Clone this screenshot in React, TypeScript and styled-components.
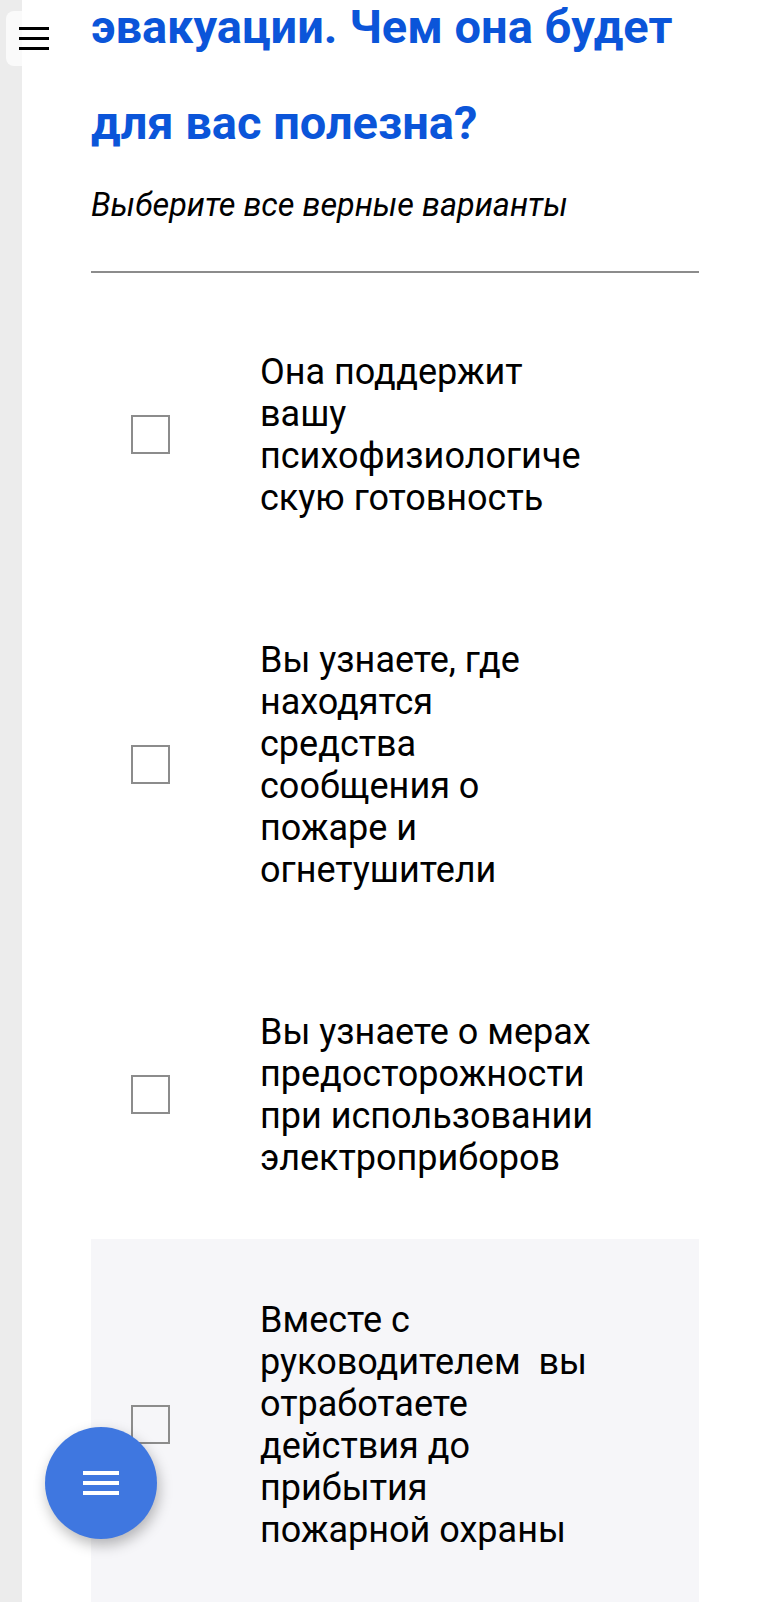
import React, { useState } from 'react';
import styled, { createGlobalStyle } from 'styled-components';

const GlobalStyle = createGlobalStyle`
  html, body {
    margin: 0;
    padding: 0;
    background: #ffffff;
  }
  body {
    font-family: Roboto, "Noto Sans", "Liberation Sans", sans-serif;
    color: #000;
  }
  * {
    box-sizing: border-box;
  }
`;

const options = [
  'Она поддержит вашу психофизиологическую готовность',
  'Вы узнаете, где находятся средства сообщения о пожаре и огнетушители',
  'Вы узнаете о мерах предосторожности при использовании электроприборов',
  'Вместе с руководителем\u00a0 вы отработаете действия до прибытия пожарной охраны'
];

const Layout = styled.div`
  display: flex;
  min-height: 100vh;
`;

const Rail = styled.div`
  width: 22px;
  flex-shrink: 0;
  background: #ececec;
`;

const Main = styled.main`
  flex: 1;
  padding: 0 68px 0 69px;
  overflow: hidden;
`;

const Title = styled.h2`
  margin: -21px 0 0;
  font-size: 47px;
  line-height: 96px;
  font-weight: 700;
  color: #0b55d9;
`;

const Hint = styled.p`
  margin: 14px 0 0;
  font-size: 32.4px;
  line-height: 40px;
  font-style: italic;
`;

const Divider = styled.hr`
  margin: 46px 0 17.5px;
  border: 0;
  height: 2px;
  background: #8c8c8c;
`;

const OptionRow = styled.label<{ $active?: boolean }>`
  display: flex;
  align-items: center;
  padding: 60px 0;
  background: ${(p) => (p.$active ? '#f6f6f9' : 'transparent')};
  cursor: pointer;
`;

const Box = styled.span<{ $checked?: boolean }>`
  width: 39px;
  height: 39px;
  margin-left: 40px;
  flex-shrink: 0;
  border: 2px solid #8c8c8c;
  background: ${(p) => (p.$checked ? '#0b55d9' : 'transparent')};
`;

const OptionText = styled.span`
  margin-left: 90px;
  width: 338px;
  font-size: 36px;
  line-height: 42px;
  overflow-wrap: anywhere;
`;

const MenuButton = styled.button`
  position: fixed;
  top: 11px;
  left: 6px;
  width: 60px;
  height: 55px;
  padding: 0 0 0 13px;
  border: 0;
  border-radius: 8px;
  background: rgba(255, 255, 255, 0.75);
  display: flex;
  flex-direction: column;
  justify-content: center;
  gap: 7px;
`;

const MenuLine = styled.span<{ $w: number; $h: number; $color: string }>`
  display: block;
  width: ${(p) => p.$w}px;
  height: ${(p) => p.$h}px;
  background: ${(p) => p.$color};
`;

const Fab = styled.button`
  position: fixed;
  left: 45px;
  top: 1427px;
  width: 112px;
  height: 112px;
  border: 0;
  border-radius: 50%;
  background: #3f77e0;
  box-shadow: 2px 6px 14px rgba(0, 0, 0, 0.28);
  display: flex;
  flex-direction: column;
  align-items: center;
  justify-content: center;
  gap: 6px;
`;

export default function App() {
  const [checked, setChecked] = useState<boolean[]>([false, false, false, false]);
  const active = 3;

  const toggle = (i: number) =>
    setChecked((prev) => prev.map((v, j) => (j === i ? !v : v)));

  return (
    <>
      <GlobalStyle />
      <Layout>
        <Rail />
        <Main>
          <Title>эвакуации. Чем она будет для вас полезна?</Title>
          <Hint>Выберите все верные варианты</Hint>
          <Divider />
          {options.map((text, i) => (
            <OptionRow key={i} $active={i === active} onClick={() => toggle(i)}>
              <Box $checked={checked[i]} />
              <OptionText>{text}</OptionText>
            </OptionRow>
          ))}
        </Main>
      </Layout>
      <MenuButton aria-label="Меню">
        <MenuLine $w={30} $h={3} $color="#000" />
        <MenuLine $w={30} $h={3} $color="#000" />
        <MenuLine $w={30} $h={3} $color="#000" />
      </MenuButton>
      <Fab aria-label="Навигация">
        <MenuLine $w={36} $h={4} $color="#fff" />
        <MenuLine $w={36} $h={4} $color="#fff" />
        <MenuLine $w={36} $h={4} $color="#fff" />
      </Fab>
    </>
  );
}
